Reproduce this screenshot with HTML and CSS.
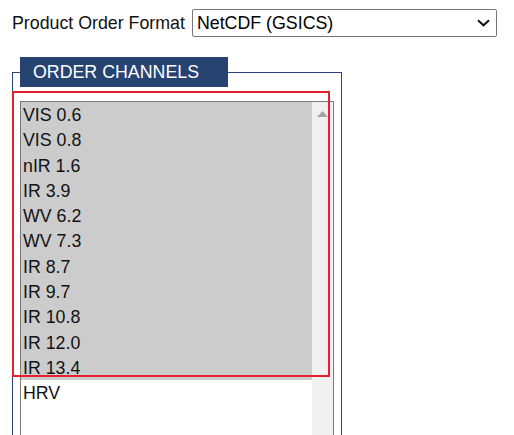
FILE: index.html
```html
<!DOCTYPE html>
<html>
<head>
<meta charset="utf-8">
<link rel="stylesheet" href="styles.css">
</head>
<body>
<div class="page">
  <div class="format-row">
    <span class="format-label">Product Order Format</span>
    <div class="fake-select">
      <span>NetCDF (GSICS)</span>
      <svg class="chevron" width="13" height="8" viewBox="0 0 13 8"><path d="M1 1.2 L6.5 6.3 L12 1.2" fill="none" stroke="#111" stroke-width="2"/></svg>
    </div>
  </div>
  <fieldset class="channels">
    <legend class="channels-legend">ORDER CHANNELS</legend>
    <div class="list-wrap">
      <div class="listbox">
        <div class="options">
          <div class="opt sel">VIS 0.6</div>
          <div class="opt sel">VIS 0.8</div>
          <div class="opt sel">nIR 1.6</div>
          <div class="opt sel">IR 3.9</div>
          <div class="opt sel">WV 6.2</div>
          <div class="opt sel">WV 7.3</div>
          <div class="opt sel">IR 8.7</div>
          <div class="opt sel">IR 9.7</div>
          <div class="opt sel">IR 10.8</div>
          <div class="opt sel">IR 12.0</div>
          <div class="opt sel">IR 13.4</div>
          <div class="opt">HRV</div>
        </div>
        <div class="scrollbar">
          <svg class="arrow" width="11" height="6" viewBox="0 0 11 6"><path d="M0 6 L5.5 0 L11 6 Z" fill="#a3a3a3"/></svg>
        </div>
      </div>
      <div class="highlight"></div>
    </div>
  </fieldset>
</div>
</body>
</html>
```
FILE: styles.css
```css
html, body {
  margin: 0;
  padding: 0;
  background: #fff;
}
body {
  font-family: "Liberation Sans", Arial, sans-serif;
  font-size: 17.8px;
  color: #111;
  overflow: hidden;
}
.page {
  padding: 9px 12px 0 12px;
}
.format-row {
  display: flex;
  align-items: center;
  gap: 7px;
}
.format-label {
  line-height: 28px;
}
.fake-select {
  box-sizing: border-box;
  width: 305px;
  height: 28px;
  border: 1px solid #767676;
  border-radius: 2px;
  display: flex;
  align-items: center;
  justify-content: space-between;
  padding: 0 6px 0 4px;
  color: #000;
}
.chevron {
  display: block;
}
.channels {
  box-sizing: border-box;
  width: 330px;
  margin: 20px 0 0 0;
  padding: 0 7px;
  border: 1px solid #2a4675;
  min-width: 0;
}
.channels-legend {
  box-sizing: border-box;
  width: 208px;
  height: 30px;
  line-height: 30px;
  padding: 0 0 0 13px;
  margin: 0;
  background: #264372;
  color: #fff;
}
.list-wrap {
  position: relative;
  margin-top: 14px;
}
.listbox {
  height: 360px;
  border: 1px solid #7a7a7a;
  display: flex;
}
.options {
  flex: 1;
  background: #fff;
}
.opt {
  box-sizing: border-box;
  height: 25.3px;
  line-height: 24.3px;
  padding: 1px 0 0 2px;
  color: #111;
}
.opt.sel {
  background: #cccccc;
}
.scrollbar {
  width: 21px;
  background: #f0f0f0;
  display: flex;
  justify-content: center;
  padding-top: 9px;
  box-sizing: border-box;
}
.arrow {
  display: block;
}
.highlight {
  position: absolute;
  left: -8px;
  top: -10px;
  width: 318px;
  height: 286px;
  box-sizing: border-box;
  border: 2px solid #e3202d;
  pointer-events: none;
}
```
